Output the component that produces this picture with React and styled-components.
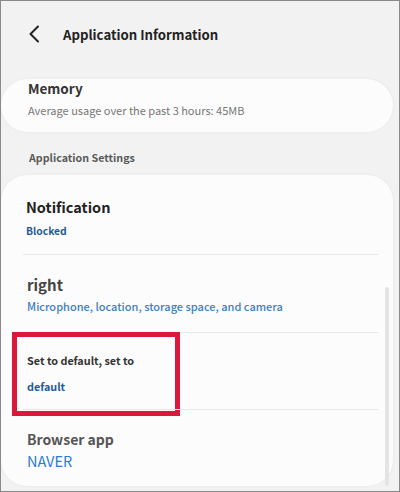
import React from 'react';
import styled, { createGlobalStyle } from 'styled-components';

const GlobalStyle = createGlobalStyle`
  html, body {
    margin: 0;
    padding: 0;
    background: #f2f2f2;
  }
  body {
    font-family: "Noto Sans CJK KR", "Noto Sans", sans-serif;
  }
`;

const Frame = styled.div`
  box-sizing: border-box;
  width: 400px;
  height: 492px;
  border: 1px solid #8a8a8a;
  background: #f2f2f2;
  overflow: hidden;
  display: flex;
  flex-direction: column;
  padding-right: 6px;
`;

const Header = styled.div`
  height: 66px;
  flex-shrink: 0;
  display: flex;
  align-items: center;
  padding-left: 26px;
`;

const BackButton = styled.button`
  display: flex;
  align-items: center;
  background: none;
  border: none;
  padding: 0;
  margin-right: 22px;
`;

const Title = styled.h1`
  margin: 0;
  font-size: 13.2px;
  font-weight: 700;
  color: #222;
`;

const Card = styled.div`
  position: relative;
  background: #fcfcfc;
  border-radius: ${p => p.$radius || 26}px;
  box-shadow: 0 0 3px rgba(0, 0, 0, 0.06);
`;

const MemoryCard = styled(Card)`
  margin-top: 12px;
  height: 54px;
  display: flex;
  flex-direction: column;
  justify-content: flex-end;
  padding: 0 27px 15px;
  box-sizing: border-box;
`;

const MemoryTitle = styled.div`
  font-size: 13.5px;
  font-weight: 700;
  color: #333;
  line-height: 18px;
  margin-bottom: 6px;
`;

const MemoryNote = styled.div`
  font-size: 11px;
  color: #777;
  line-height: 14px;
`;

const SectionLabel = styled.div`
  font-size: 10.7px;
  font-weight: 700;
  color: #5a5a5a;
  padding: 19px 28px 10px;
  line-height: 14px;
`;

const SettingsCard = styled(Card)`
  flex: 1;
  margin-bottom: 6px;
  display: flex;
  flex-direction: column;
`;

const Row = styled.div`
  position: relative;
  height: ${p => p.$height}px;
  box-sizing: border-box;
  display: flex;
  flex-direction: column;
  justify-content: center;
  gap: ${p => p.$gap || 6}px;
  padding: ${p => p.$shift || 0}px 25px 0;
  & + & {
    border-top: 1px solid #e8e8e8;
    margin: 0 15px 0 22px;
    padding: ${p => p.$shift || 0}px 4px 0;
  }
`;

const RowTitle = styled.div`
  font-size: ${p => p.$size || 16}px;
  font-weight: ${p => p.$weight || 700};
  color: ${p => p.$color || '#222'};
  line-height: 20px;
`;

const RowValue = styled.div`
  font-size: ${p => p.$size || 11}px;
  font-weight: ${p => p.$weight || 700};
  color: ${p => p.$color || '#1f5b99'};
  line-height: 16px;
`;

const Highlight = styled.div`
  position: absolute;
  left: -11px;
  top: -1px;
  width: 168px;
  height: 84px;
  box-sizing: border-box;
  border: 5px solid #d8193c;
  pointer-events: none;
`;

const ScrollThumb = styled.div`
  position: absolute;
  right: 4px;
  top: 112px;
  bottom: 0;
  width: 4px;
  border-radius: 2px;
  background: #e4e4e4;
`;

function ChevronLeft() {
  return (
    <svg width="14" height="18" viewBox="0 0 14 18" fill="none">
      <path d="M11 1.5 L3.5 9 L11 16.5" stroke="#222" strokeWidth="2" strokeLinecap="round" strokeLinejoin="round" />
    </svg>
  );
}

export default function App() {
  return (
    <>
      <GlobalStyle />
      <Frame>
        <Header>
          <BackButton><ChevronLeft /></BackButton>
          <Title>Application Information</Title>
        </Header>

        <MemoryCard $radius={27}>
          <MemoryTitle>Memory</MemoryTitle>
          <MemoryNote>Average usage over the past 3 hours: 45MB</MemoryNote>
        </MemoryCard>

        <SectionLabel>Application Settings</SectionLabel>

        <SettingsCard>
          <Row $height={79} $gap={6} $shift={6}>
            <RowTitle $size={14.5}>Notification</RowTitle>
            <RowValue $size={10.3}>Blocked</RowValue>
          </Row>
          <Row $height={78} $gap={3} $shift={0}>
            <RowTitle $size={15} $weight={600} $color="#444">right</RowTitle>
            <RowValue $size={11} $weight={500} $color="#3f7fbd">Microphone, location, storage space, and camera</RowValue>
          </Row>
          <Row $height={77} $gap={8} $shift={4}>
            <RowTitle $size={10.8} $color="#333">Set to default, set to</RowTitle>
            <RowValue $size={10.8}>default</RowValue>
            <Highlight />
          </Row>
          <Row $height={77} $gap={4} $shift={1}>
            <RowTitle $size={14} $weight={600} $color="#555">Browser app</RowTitle>
            <RowValue $size={14.5} $weight={400} $color="#2b7bd0">NAVER</RowValue>
          </Row>
          <ScrollThumb />
        </SettingsCard>
      </Frame>
    </>
  );
}
